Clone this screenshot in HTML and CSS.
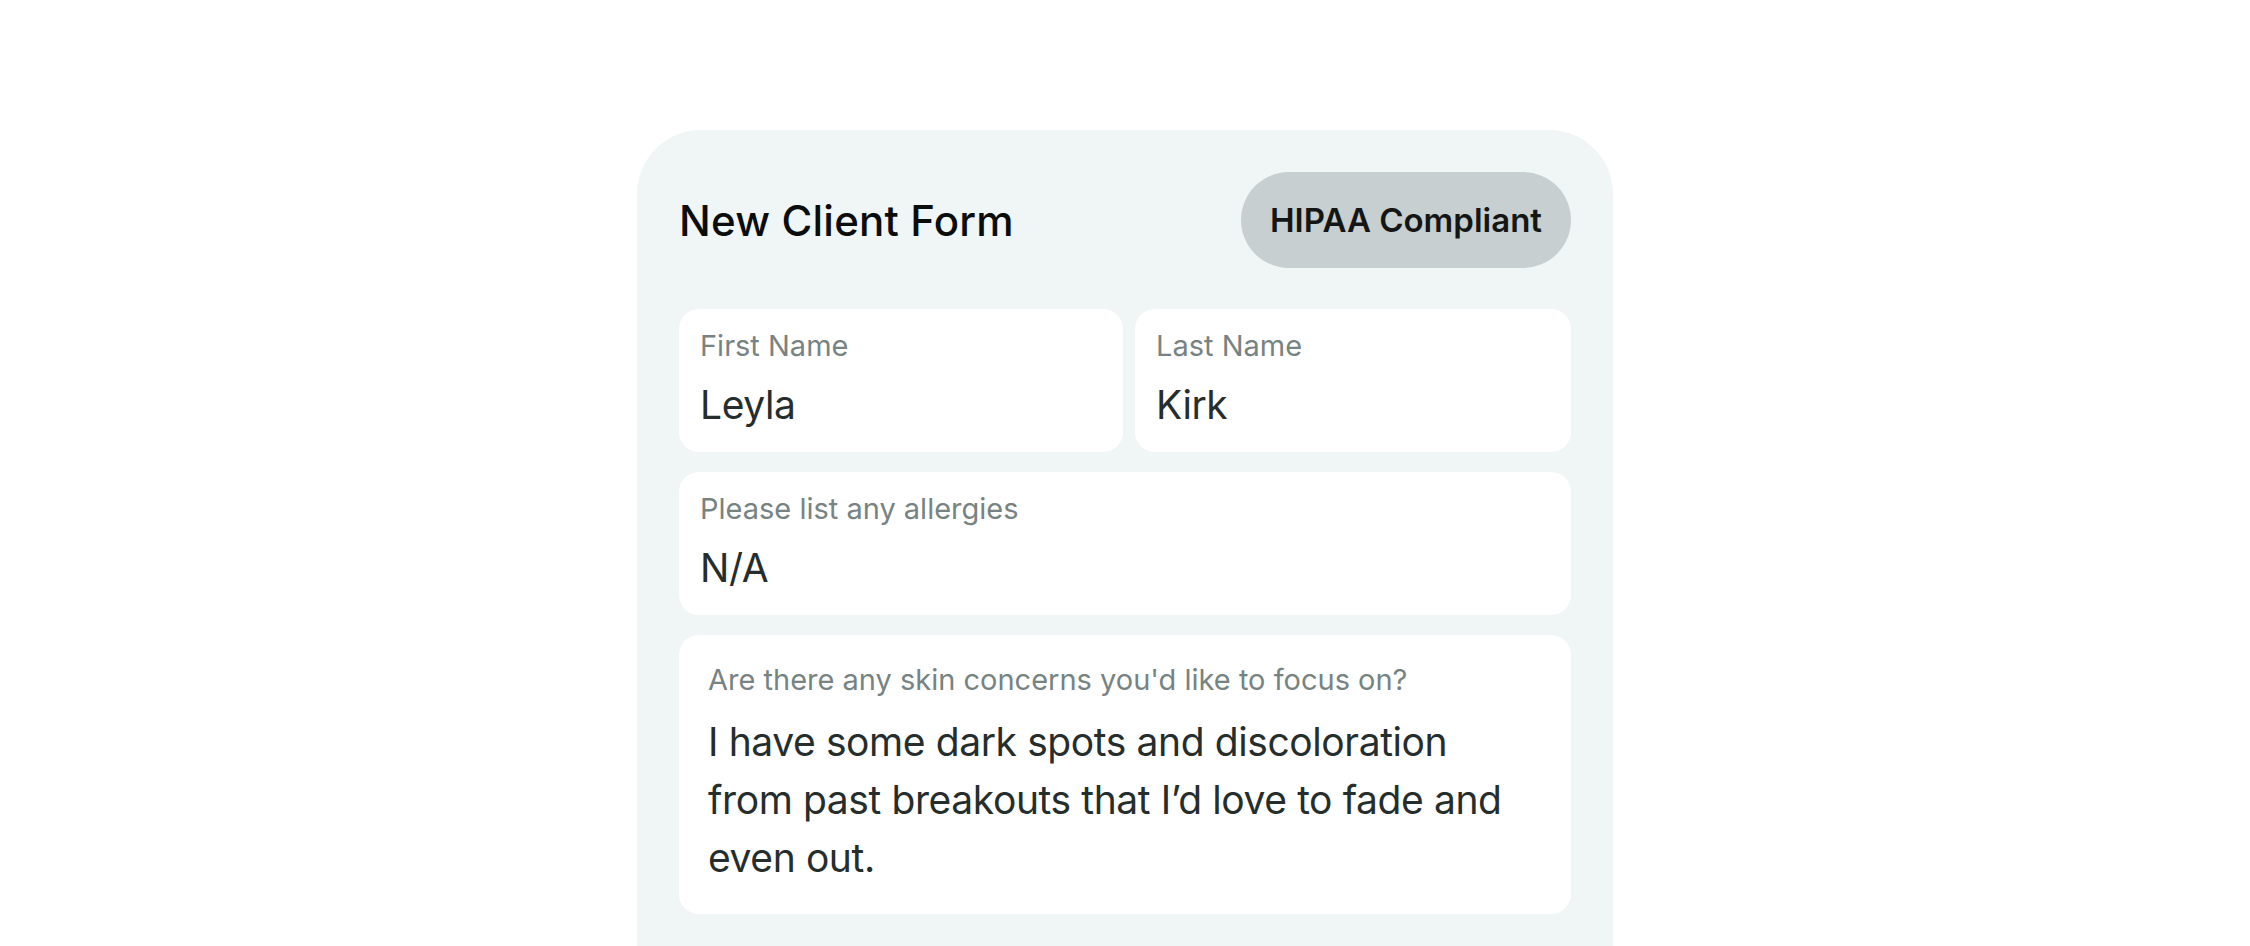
FILE: index.html
```html
<!DOCTYPE html>
<html lang="en">
<head>
<meta charset="utf-8">
<title>New Client Form</title>
<link rel="stylesheet" href="styles.css">
</head>
<body>
<main class="stage">
  <section class="form-card">
    <header class="form-header">
      <h1 class="form-title">New Client Form</h1>
      <span class="badge">HIPAA Compliant</span>
    </header>
    <div class="fields">
      <div class="row">
        <div class="field field-first">
          <div class="label">First Name</div>
          <div class="value">Leyla</div>
        </div>
        <div class="field field-last">
          <div class="label">Last Name</div>
          <div class="value">Kirk</div>
        </div>
      </div>
      <div class="field">
        <div class="label">Please list any allergies</div>
        <div class="value">N/A</div>
      </div>
      <div class="field field-long">
        <div class="label">Are there any skin concerns you'd like to focus on?</div>
        <div class="value value-long">I have some dark spots and discoloration from past breakouts that I’d love to fade and even out.</div>
      </div>
    </div>
  </section>
</main>
</body>
</html>
```
FILE: styles.css
```css
* { box-sizing: border-box; }
html, body { margin: 0; padding: 0; background: #ffffff; }
body {
  font-family: Inter, "Liberation Sans", Arial, sans-serif;
  overflow: hidden;
  height: 946px;
}
.stage {
  display: flex;
  justify-content: flex-start;
  padding: 130px 0 0 637px;
}
.form-card {
  width: 976px;
  min-height: 830px;
  background: #f0f5f5;
  border-radius: 64px 64px 0 0;
  padding: 42px 42px 0 42px;
}
.form-header {
  display: flex;
  align-items: center;
  justify-content: space-between;
  height: 96px;
  margin-bottom: 41px;
}
.form-title {
  margin: 0;
  font-size: 42px;
  font-weight: 450;
  letter-spacing: 0.2px;
  color: #0b0c0c;
}
.badge {
  display: flex;
  align-items: center;
  justify-content: center;
  width: 330px;
  height: 96px;
  border-radius: 48px;
  background: #c8cfd0;
  font-size: 33px;
  font-weight: 600;
  letter-spacing: 0;
  color: #141615;
}
.fields {
  display: flex;
  flex-direction: column;
  gap: 20px;
}
.row {
  display: flex;
  gap: 12px;
}
.field {
  background: #ffffff;
  border-radius: 20px;
  height: 143px;
  padding: 19px 21px 0 21px;
}
.field-first { flex: 0 0 444px; }
.field-last { flex: 1 1 auto; }
.label {
  font-size: 29px;
  line-height: 36px;
  color: #778382;
  letter-spacing: 0;
}
.value {
  margin-top: 18px;
  font-size: 39px;
  line-height: 46px;
  color: #252e2d;
  letter-spacing: -0.4px;
}
.field-long {
  height: 279px;
  padding: 27px 29px 0 29px;
}
.value-long {
  margin-top: 15px;
  line-height: 58px;
  max-width: 820px;
}
```
